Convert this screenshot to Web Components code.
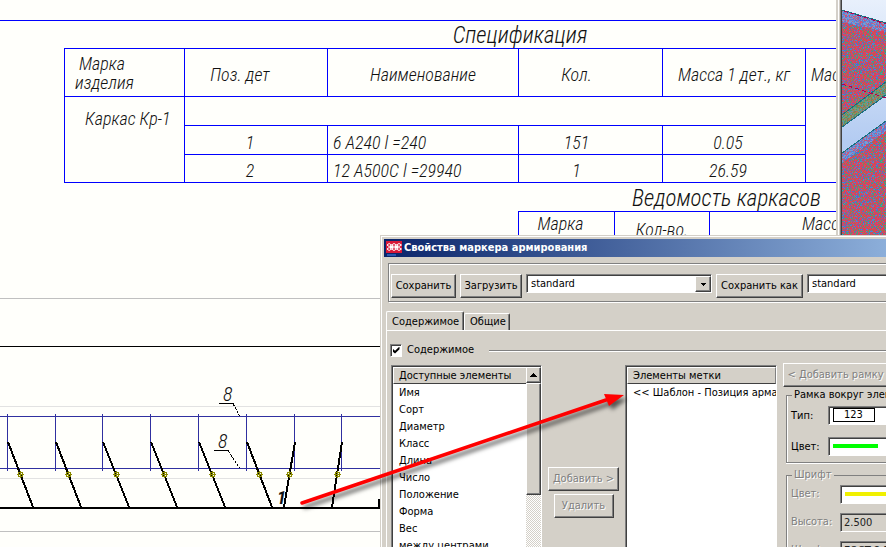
<!DOCTYPE html>
<html lang="ru">
<head>
<meta charset="utf-8">
<title>Свойства маркера армирования</title>
<style>
  html, body { margin: 0; height: 100%; overflow: hidden; }
</style>
</head>
<body>
<cad-workspace></cad-workspace>
<script>
const define = (name, html, init) => {
  const tpl = document.createElement('template');
  tpl.innerHTML = html;
  customElements.define(name, class extends HTMLElement {
    constructor() {
      super();
      this.attachShadow({ mode: 'open' }).append(tpl.content.cloneNode(true));
    }
    connectedCallback() { if (init) init(this, this.shadowRoot); }
  });
};

/* Raised push button, with a disabled embossed look */
define('push-button', `
<style>
  :host { display: inline-block; }
  button {
    display: block; width: 100%; height: 24px; padding: 0 2px; box-sizing: border-box;
    font: inherit; color: #000; background: #d4d0c8; white-space: nowrap;
    border: 1px solid; border-color: #fff #404040 #404040 #fff;
    box-shadow: inset -1px -1px #808080; border-radius: 0;
  }
  button:disabled { color: #808080; text-shadow: 1px 1px #fff; }
</style>
<button type="button"><slot></slot></button>`,
(host, root) => { root.querySelector('button').disabled = host.hasAttribute('disabled'); });

/* List with a header cell and an optional scroll bar */
define('list-panel', `
<style>
  :host {
    display: grid; grid-template-columns: minmax(0, 1fr) auto; grid-template-rows: 17px minmax(0, 1fr); box-sizing: border-box; overflow: hidden;
    background: #fff; border: 1px solid; border-color: #808080 #fff #fff #808080;
    box-shadow: inset 1px 1px #404040;
    padding: 1px 0 0 1px;
  }
  .head {
    height: 15px; line-height: 15px; padding-left: 5px; background: #d4d0c8; overflow: hidden; white-space: nowrap;
    border: 1px solid; border-color: #fff #808080 #404040 #fff;
  }
  .items { overflow: hidden; grid-column: 1; grid-row: 2; }
  .bar { display: none; width: 15px; grid-column: 2; grid-row: 1 / 3; flex-direction: column;
    background: repeating-conic-gradient(#d4d0c8 0 25%, #fff 0 50%) 0 0 / 2px 2px; }
  :host([scroll]) .bar { display: flex; }
  :host([scroll]) .head { border-right: 0; }
  .bar button { height: 16px; width: 15px; padding: 0; background: #d4d0c8;
    border: 1px solid; border-color: #fff #404040 #404040 #fff; box-shadow: inset -1px -1px #808080;
    display: grid; place-items: center; }
  .thumb { height: 110px; background: #d4d0c8; border: 1px solid; border-color: #fff #404040 #404040 #fff;
    box-shadow: inset -1px -1px #808080; }
  ::slotted(ul) { margin: 0; padding: 0 0 0 6px; list-style: none; line-height: 17px; white-space: nowrap; }
</style>
<div class="head"><slot name="head"></slot></div>
<div class="bar">
  <button type="button" aria-label="Вверх"><svg width="7" height="4" viewBox="0 0 7 4" shape-rendering="crispEdges"><path d="M3 0h1v1h1v1h1v1h1v1H0V3h1V2h1V1h1z"/></svg></button>
  <div class="thumb"></div>
</div>
<div class="items"><slot></slot></div>`);

/* Etched group frame with a caption */
define('group-frame', `
<style>
  :host { display: block; }
  fieldset { margin: 0; padding: 0 0 0 4px; min-width: 0; border: 1px solid #808080; border-right: 0;
    box-shadow: 0 1px #fff, inset 1px 0 #fff; box-sizing: border-box; }
  legend { padding: 0 2px; margin-left: 1px; line-height: 10px; background: #d4d0c8; white-space: nowrap; }
  :host([disabled]) { color: #808080; text-shadow: 1px 1px #fff; }
</style>
<fieldset><legend><slot name="legend"></slot></legend><slot></slot></fieldset>`);

/* Specification table of the drawing */
define('spec-tables', `
<style>
  :host { display: block; font: italic 300 18px/19px "Roboto Condensed", "Liberation Sans", sans-serif; color: #111; }
  table { border-collapse: collapse; table-layout: fixed; white-space: nowrap; }
  caption { font-size: 23px; line-height: 24px; }
  th, td { border: 1px solid #00f; padding: 4px 0 0; font-weight: inherit; text-align: center; box-sizing: border-box; }
  .spec { width: 912px; margin-left: 64px; }
  .spec caption { padding-top: 3px; }
  .spec thead tr { height: 48px; }
  .spec tbody tr { height: 29px; }
  .spec tbody tr:last-child { height: 28px; }
  .spec .first { text-align: left; padding: 0 10px; }
  .spec .mark { vertical-align: top; text-align: left; padding: 12px 0 0 20px; }
  .pos { padding-right: 32px; }
  .qty { padding-right: 28px; }
  .num { padding-right: 12px; }
  .name, .last { text-align: left; padding-left: 5px; }
  .frames { width: 417px; margin-left: 518px; }
  .frames caption { padding-top: 4px; }
  .frames th { height: 33px; vertical-align: top; padding: 2px 12px 0 0; }
  .frames .low { padding: 8px 0 0; }
  .frames .mass { padding: 2px 0 0 92px; text-align: left; }
</style>
<table class="spec">
  <caption>Спецификация</caption>
  <colgroup><col style="width:120px"><col style="width:143px"><col style="width:191px"><col style="width:144px"><col style="width:143px"><col></colgroup>
  <thead><tr><th class="first">&nbsp;Марка<br>изделия</th><th class="pos">Поз. дет</th><th>Наименование</th><th class="qty">Кол.</th><th>Масса 1 дет., кг</th><th class="last">Масса</th></tr></thead>
  <tbody>
    <tr><td class="mark" rowspan="3">Каркас Кр-1</td><td colspan="4"></td><td rowspan="3"></td></tr>
    <tr><td class="num">1</td><td class="name">6 А240 l =240</td><td class="qty">151</td><td class="num">0.05</td></tr>
    <tr><td class="num">2</td><td class="name">12 А500С l =29940</td><td class="qty">1</td><td class="num">26.59</td></tr>
  </tbody>
</table>
<table class="frames">
  <caption>Ведомость каркасов</caption>
  <colgroup><col style="width:96px"><col style="width:95px"><col></colgroup>
  <thead><tr><th>Марка</th><th class="low">Кол-во.</th><th class="mass">Масс</th></tr></thead>
</table>`);

/* Side view of the reinforcement cage */
define('cage-view', `
<style>
  :host { display: block; height: 302px; }
  svg { display: block; }
  text { font: italic 300 20px "Roboto Condensed", "Liberation Sans", sans-serif; fill: #111; }
  .b { font-weight: bold; font-size: 18px; }
</style>
<svg width="836" height="302" viewBox="0 245 836 302" shape-rendering="crispEdges" fill="none">
  <path stroke="#c0c0c0" d="M0 298.5H836M0 531.5H836"/>
  <path stroke="#e2e2e2" d="M0 406.5H836M0 478.5H836"/>
  <path stroke="#000" d="M0 346.5H836"/>
  <path stroke="#3030a0" d="M0 416.5H836M0 468.5H836"/>
  <path stroke="#000" stroke-width="2" d="M0 508H380M379 499V508"/>
  <g id="bars"></g>
  <path stroke="#000" d="M219 403.5H233M214 450.5H228"/>
  <path stroke="#000" stroke-dasharray="3 1" d="M233 403.5L239.500 416M228 450.500L239.500 468"/>
  <text x="223" y="401">8</text><text x="218" y="448">8</text><text class="b" x="277" y="504">1</text>
</svg>`, (host, root) => {
  const rows = [[7,33],[55,81],[102,129],[150,177],[198,225],[246,272],[294,284],[341,332]];
  root.querySelector('#bars').innerHTML = rows.map(([a, b]) => {
    const m = Math.round((a + b) / 2);
    return `<path stroke="#3030a0" d="M${a}.5 414V471"/><path stroke="#000" stroke-width="2" d="M${a + 1} 442L${b} 507"/>
      <path stroke="#8a8a00" d="M${m - 3} 474.5h7M${m}.5 471v7M${m - 2}.5 472.5h4v4h-4z"/>`;
  }).join('');
});

/* Rendered model, seen in the neighbouring viewport */
define('model-view', `
<style>
  :host { display: block; overflow: hidden; background: linear-gradient(#e8f0fc, #b4ccf2 140px); }
  svg { display: block; }
</style>
<svg width="100%" height="547" shape-rendering="crispEdges">
  <defs>
    <pattern id="red" width="44" height="44" patternUnits="userSpaceOnUse"></pattern>
    <pattern id="blue" width="44" height="44" patternUnits="userSpaceOnUse"></pattern>
    <pattern id="green" width="44" height="44" patternUnits="userSpaceOnUse"></pattern>
  </defs>
  <path fill="url(#red)" d="M0 10L44 23V83L0 115Z"/>
  <path fill="url(#blue)" d="M0 10L44 23V32L0 22Z"/>
  <path fill="url(#green)" d="M0 115L44 82V95L0 127Z"/>
  <path fill="url(#red)" d="M0 153L44 121V547H0Z"/>
  <path fill="url(#blue)" d="M0 153L44 121V131L0 163Z"/>
  <path fill="none" stroke="#187080" d="M0 10L44 23M0 115L44 82M0 127L44 95M0 153L44 121"/>
  <path fill="none" stroke="#b00050" stroke-dasharray="4 3" d="M2 11L44 24M0 84L44 98"/>
</svg>`, (host, root) => {
  const sets = {
    red: ['#e04058','#e04058','#d84860','#4888d8','#5070c8','#48a078','#b85070','#b06848','#d04870'],
    blue: ['#5088d8','#6890d8','#8098d0','#d05070','#7070c8','#70a0d8','#c06088'],
    green: ['#489870','#78a068','#6890b0','#a87858','#58a088','#907848']
  };
  let s = 7;
  const rnd = () => (s = (s * 16807) % 2147483647) / 2147483647;
  for (const id in sets) {
    let out = '';
    for (let y = 0; y < 44; y++) for (let x = 0; x < 44; x++) {
      const c = sets[id];
      out += `<rect x="${x}" y="${y}" width="1" height="1" fill="${c[Math.floor(rnd() * c.length)]}"/>`;
    }
    root.getElementById(id).innerHTML = out;
  }
});

/* Dialog window */
define('marker-dialog', `
<style>
  :host {
    display: flex; flex-direction: column; box-sizing: border-box; padding: 2px; background: #d4d0c8;
    border: 1px solid #d4d0c8; box-shadow: inset 1px 1px #fff;
    font: 11px/14px "DejaVu Sans Condensed", "DejaVu Sans", sans-serif; color: #000; white-space: nowrap;
  }
  header { display: flex; align-items: center; gap: 2px; height: 18px; margin: 1px 0 0 1px; padding-left: 2px; color: #fff;
    background: linear-gradient(90deg, #0a246a, #a6caf0); }
  h1 { margin: 0; font-size: 11px; line-height: 16px; }
  input, select { font: inherit; color: #000; border-radius: 0; box-sizing: border-box; }
  .tools { display: flex; align-items: flex-start; gap: 4px; margin: 6px 0 0 5px; padding: 10px 2px 4px;
    border: 1px solid #808080; box-shadow: inset 1px 1px #fff, 1px 1px #fff; height: 39px; box-sizing: border-box; }
  .save { width: 65px; } .load { width: 62px; } .saveas { width: 87px; }
  .well { height: 19px; box-sizing: border-box; border: 1px solid; border-color: #808080 #fff #fff #808080; box-shadow: inset 1px 1px #404040;
    background: #fff; padding: 1px 1px 1px 4px; }
  .combo { position: relative; display: flex; width: 186px; padding: 0; }
  .combo select { appearance: none; border: 0; width: 100%; padding: 1px 0 0 4px; background: none; }
  .arrow { position: absolute; right: 0; top: 1px; bottom: 0; width: 16px; box-sizing: border-box; background: #d4d0c8; display: grid; place-items: center; pointer-events: none;
    border: 1px solid; border-color: #fff #404040 #404040 #fff; box-shadow: inset -1px -1px #808080; }
  .name { flex: 1; min-width: 0; }
  nav { display: flex; align-items: flex-end; margin: 9px 0 0 3px; height: 19px; }
  nav button { font: inherit; padding: 0 5px; background: #d4d0c8; border: 1px solid; border-color: #fff #404040 transparent #fff; border-bottom: 0;
    box-shadow: inset -1px 0 #808080; border-radius: 2px 2px 0 0; height: 17px; width: 46px; box-sizing: border-box; }
  nav button[aria-selected=true] { height: 20px; width: 78px; margin-bottom: -1px; }
  .page { flex: 1; min-height: 0; display: flex; flex-direction: column; margin-left: 3px; padding: 12px 0 0 4px;
    border: 1px solid #fff; border-width: 1px 0 0 1px; }
  .tick { display: flex; align-items: center; gap: 5px; height: 14px; }
  .tick label { display: flex; align-items: center; gap: 5px; }
  .tick input { appearance: none; margin: 0 0 0 -1px; width: 12px; height: 13px; background: #fff; border: 1px solid; border-color: #808080 #fff #fff #808080; box-shadow: inset 1px 1px #404040; display: grid; place-items: center; }
  .tick input:checked::before { content: ""; width: 7px; height: 7px; background: #000; clip-path: polygon(0 30%, 36% 60%, 100% 0, 100% 40%, 36% 100%, 0 70%); }
  .tick i { flex: 1; height: 1px; margin-left: 10px; background: #808080; box-shadow: 0 1px #fff; }
  .cols { flex: 1; min-height: 0; display: grid; grid-template-columns: 151px 71px 152px minmax(0, 1fr); gap: 6px; margin-top: 8px; }
  .mid { display: flex; flex-direction: column; align-items: center; gap: 3px; padding-top: 102px; }
  .add { width: 71px; } .del { width: 60px; }
  .right { display: flex; flex-direction: column; margin-top: -2px; }
  .frame { width: 105px; }
  group-frame { margin: 3px 0 0 3px; }
  group-frame.font { margin-top: 7px; }
  .row { display: grid; grid-template-columns: 37px minmax(0, 1fr); align-items: center; height: 31px; }
  .row.wide { grid-template-columns: 49px minmax(0, 1fr); height: 28px; }
  .swatch { appearance: none; border: 0; padding: 0; width: 45px; height: 4px; display: block; margin: 5px 0 0; background: #0f0; }
  .yellow { background: #f0f000; }
  .kind { appearance: none; display: block; border: 1px solid #000; background: #fff; width: 42px; height: 14px; line-height: 12px; padding: 0 0 0 10px; }
  input.well:disabled { background: #d4d0c8; color: #222; width: 100%; padding-left: 3px; }
</style>
<header>
  <svg width="16" height="17" viewBox="0 0 16 17"><path fill="#d81838" d="M0 1h16v12H0z"/><path fill="#2858b0" d="M1 14h9v2H1z"/><path fill="none" stroke="#fff" stroke-width="1" d="M1 5q2-3 4.500 0t5 0 5 0M1 5q2 3 4.500 0t5 0 5 0M1 9q2-3 4.500 0t5 0 5 0M1 9q2 3 4.500 0t5 0 5 0"/><path fill="#fff" d="M4 6h3v2H4zM9 6h3v2H9z"/></svg>
  <h1>Свойства маркера армирования</h1>
</header>
<div class="tools">
  <push-button class="save">Сохранить</push-button>
  <push-button class="load">Загрузить</push-button>
  <div class="well combo"><select aria-label="Набор свойств"><option>standard</option></select>
    <span class="arrow"><svg width="5" height="3" viewBox="0 0 5 3" shape-rendering="crispEdges"><path d="M0 0h5v1H4v1H3v1H2V2H1V1H0z"/></svg></span></div>
  <push-button class="saveas">Сохранить как</push-button>
  <input class="well name" aria-label="Имя набора" value="standard">
</div>
<nav role="tablist"><button type="button" role="tab" aria-selected="true">Содержимое</button><button type="button" role="tab" aria-selected="false">Общие</button></nav>
<section class="page">
  <div class="tick"><label><input type="checkbox" checked>Содержимое</label><i></i></div>
  <div class="cols">
    <list-panel scroll><span slot="head">Доступные элементы</span>
      <ul><li>Имя</li><li>Сорт</li><li>Диаметр</li><li>Класс</li><li>Длина</li><li>Число</li><li>Положение</li><li>Форма</li><li>Вес</li><li>между центрами</li></ul></list-panel>
    <div class="mid"><push-button class="add" disabled>Добавить &gt;</push-button><push-button class="del" disabled>Удалить</push-button></div>
    <list-panel><span slot="head">Элементы метки</span><ul><li>&lt;&lt; Шаблон - Позиция армат</li></ul></list-panel>
    <div class="right">
      <push-button class="frame" disabled>&lt; Добавить рамку</push-button>
      <group-frame><span slot="legend">Рамка вокруг элем</span>
        <div class="row"><label for="kind">Тип:</label><div class="well"><select id="kind" class="kind"><option>123</option></select></div></div>
        <div class="row"><label for="col">Цвет:</label><div class="well"><select id="col" class="swatch"><option></option></select></div></div>
      </group-frame>
      <group-frame disabled class="font"><span slot="legend">Шрифт</span>
        <div class="row wide"><label for="fcol">Цвет:</label><div class="well"><select id="fcol" class="swatch yellow"><option></option></select></div></div>
        <div class="row wide"><label for="fh">Высота:</label><input id="fh" class="well" disabled value="2.500"></div>
        <div class="row wide"><label for="ff">Шрифт:</label><input id="ff" class="well" disabled value="ГОСТ 2.3"></div>
      </group-frame>
    </div>
  </div>
</section>`);

/* Desktop: drawing sheet, model viewport, dialog on top, pointer arrow */
define('cad-workspace', `
<style>
  :host { display: grid; grid-template-columns: minmax(0, 1fr) 50px; height: 100vh; position: relative; overflow: hidden; }
  .sheet { overflow: hidden; background: #fffffb; padding-top: 20px; }
  .rule { height: 1px; background: #00f; }
  .model { display: grid; grid-template-columns: 6px minmax(0, 1fr); min-height: 0; overflow: hidden; }
  .sash { background: linear-gradient(90deg, #d4d0c8 2px, #fff 2px 3px, #d4d0c8 3px 4px, #808080 4px 5px, #404040 5px); }
  marker-dialog { position: absolute; left: 380px; top: 235px; right: -103px; bottom: -40px; }
  .pointer { position: absolute; left: 290px; top: 380px; pointer-events: none; filter: drop-shadow(3px 4px 2px rgba(0, 0, 0, .6)); }
</style>
<main class="sheet"><div class="rule"></div><spec-tables></spec-tables><cage-view></cage-view></main>
<div class="model"><div class="sash"></div><model-view></model-view></div>
<marker-dialog></marker-dialog>
<svg class="pointer" width="345" height="135" viewBox="290 380 345 135"><path stroke="#f00" stroke-width="3.500" stroke-linecap="round" d="M302 503L606 400"/><path fill="#f00" d="M624 395L604 394L609 406Z"/></svg>`);
</script>
</body>
</html>
